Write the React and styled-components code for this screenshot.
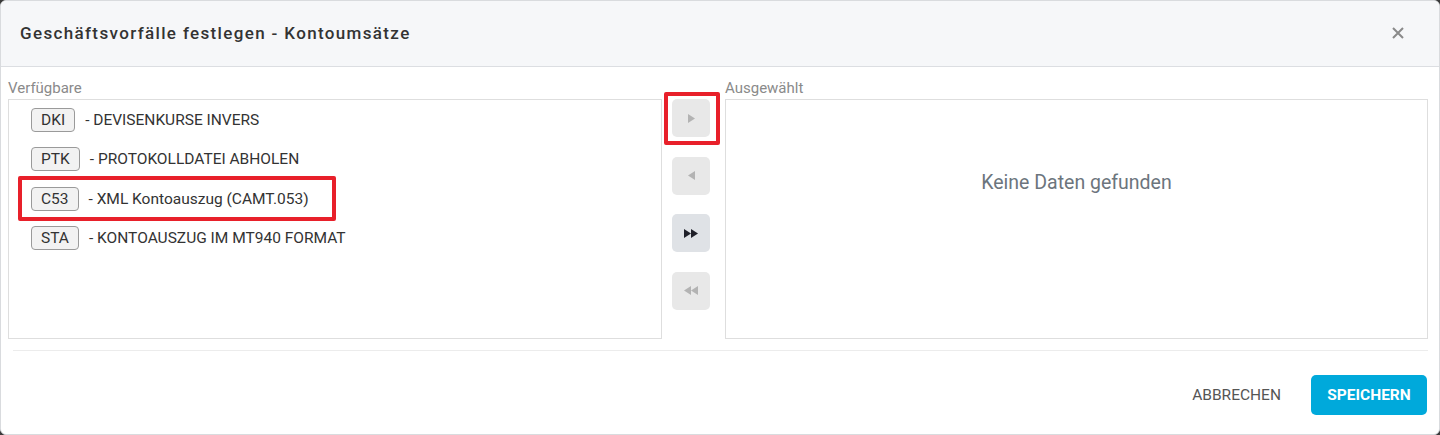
import React from "react";
import styled, { createGlobalStyle } from "styled-components";

const Global = createGlobalStyle`
  html, body { margin: 0; padding: 0; background: #3a3a3a; }
  body { font-family: Roboto, "Liberation Sans", Arial, sans-serif; }
  *, *::before, *::after { box-sizing: border-box; }
`;

const Dialog = styled.div`
  width: 1440px;
  height: 435px;
  background: #fff;
  border: 1px solid #d9dbde;
  border-radius: 6px;
  overflow: hidden;
  display: flex;
  flex-direction: column;
`;

const Header = styled.div`
  height: 66px;
  flex: none;
  background: #f6f7f9;
  border-bottom: 1px solid #dcdee2;
  display: flex;
  align-items: center;
  justify-content: space-between;
  padding: 0 34px 1px 19px;
`;

const Title = styled.h1`
  margin: 0;
  font-size: 17px;
  font-weight: 500;
  letter-spacing: 1.35px;
  color: #333;
`;

const CloseButton = styled.button`
  border: 0;
  background: none;
  padding: 0;
  width: 14px;
  height: 14px;
  display: flex;
  align-items: center;
  justify-content: center;
  cursor: pointer;
`;

const Body = styled.div`
  display: grid;
  grid-template-columns: 654px 63px 1fr;
  padding: 11px 11px 0 7px;
`;

const Column = styled.div`
  display: flex;
  flex-direction: column;
`;

const Label = styled.div`
  font-size: 15px;
  line-height: 21px;
  color: #8a8a8a;
`;

const ListBox = styled.div`
  height: 240px;
  border: 1px solid #dedede;
  display: flex;
  flex-direction: column;
  justify-content: ${(p) => (p.$empty ? "center" : "flex-start")};
  align-items: ${(p) => (p.$empty ? "center" : "stretch")};
  padding-bottom: ${(p) => (p.$empty ? "74px" : "0")};
`;

const Row = styled.div`
  position: relative;
  height: 39.5px;
  display: flex;
  align-items: center;
  padding-left: 22px;
  font-size: 15.5px;
  color: #333;

  ${(p) =>
    p.$marked &&
    `
    &::after {
      content: "";
      position: absolute;
      left: 9px;
      width: 318px;
      top: -3px;
      height: 45px;
      border: 4px solid #e8202a;
      border-radius: 2px;
      pointer-events: none;
    }
  `}
`;

const Chip = styled.span`
  display: inline-flex;
  align-items: center;
  height: 24px;
  padding: 0 9px;
  border: 1px solid #9a9a9a;
  border-radius: 4px;
  background: #f2f2f2;
  font-size: 15.5px;
  color: #333;
`;

const RowText = styled.span`
  margin-left: 10px;
`;

const Transfer = styled.div`
  display: flex;
  flex-direction: column;
  gap: 19.5px;
  padding: 21px 0 0 10px;
`;

const MoveButton = styled.button`
  position: relative;
  width: 38px;
  height: 38px;
  border: 0;
  border-radius: 5px;
  background: ${(p) => (p.$active ? "#dfe2e6" : "#e8e8e8")};
  display: flex;
  align-items: center;
  justify-content: center;
  padding: 0;
  cursor: ${(p) => (p.$active ? "pointer" : "default")};

  ${(p) =>
    p.$marked &&
    `
    &::after {
      content: "";
      position: absolute;
      left: -8px;
      right: -10px;
      top: -7px;
      bottom: -8px;
      border: 4px solid #e8202a;
      border-radius: 2px;
      pointer-events: none;
    }
  `}
`;

const EmptyText = styled.div`
  font-size: 19.5px;
  color: #6c757d;
`;

const Divider = styled.hr`
  margin: 11px 11px 0 12px;
  border: 0;
  border-top: 1px solid #ececec;
`;

const Footer = styled.div`
  flex: 1;
  display: flex;
  align-items: center;
  justify-content: flex-end;
  padding: 4px 12px 0 0;
  gap: 15px;
`;

const TextButton = styled.button`
  border: 0;
  background: none;
  font-family: inherit;
  font-size: 15.5px;
  color: #555;
  padding: 0 15px;
  height: 40px;
  cursor: pointer;
`;

const PrimaryButton = styled.button`
  border: 0;
  border-radius: 5px;
  background: #00a9db;
  color: #fff;
  font-family: inherit;
  font-size: 15.5px;
  font-weight: 700;
  width: 116px;
  height: 40px;
  cursor: pointer;
`;

const Arrow = ({ dir = "right", double = false, color }) => {
  const single = (x) =>
    dir === "right" ? `M${x} 0 L${x + 7} 4.5 L${x} 9 Z` : `M${x + 7} 0 L${x} 4.5 L${x + 7} 9 Z`;
  return (
    <svg width={double ? 14 : 7} height="9" viewBox={double ? "0 0 14 9" : "0 0 7 9"}>
      <path d={single(0)} fill={color} />
      {double && <path d={single(7)} fill={color} />}
    </svg>
  );
};

const items = [
  { code: "DKI", text: "- DEVISENKURSE INVERS" },
  { code: "PTK", text: "- PROTOKOLLDATEI ABHOLEN" },
  { code: "C53", text: "- XML Kontoauszug (CAMT.053)", marked: true },
  { code: "STA", text: "- KONTOAUSZUG IM MT940 FORMAT" },
];

export default function App() {
  return (
    <>
      <Global />
      <Dialog>
        <Header>
          <Title>Geschäftsvorfälle festlegen - Kontoumsätze</Title>
          <CloseButton aria-label="Schließen">
            <svg width="12" height="12" viewBox="0 0 12 12">
              <path d="M1 1 L11 11 M11 1 L1 11" stroke="#8a8a8a" strokeWidth="2" />
            </svg>
          </CloseButton>
        </Header>
        <Body>
          <Column>
            <Label>Verfügbare</Label>
            <ListBox>
              {items.map((it) => (
                <Row key={it.code} $marked={it.marked}>
                  <Chip>{it.code}</Chip>
                  <RowText>{it.text}</RowText>
                </Row>
              ))}
            </ListBox>
          </Column>
          <Transfer>
            <MoveButton $marked>
              <Arrow dir="right" color="#b3b3b3" />
            </MoveButton>
            <MoveButton>
              <Arrow dir="left" color="#b3b3b3" />
            </MoveButton>
            <MoveButton $active>
              <Arrow dir="right" double color="#1f2029" />
            </MoveButton>
            <MoveButton>
              <Arrow dir="left" double color="#b3b3b3" />
            </MoveButton>
          </Transfer>
          <Column>
            <Label>Ausgewählt</Label>
            <ListBox $empty>
              <EmptyText>Keine Daten gefunden</EmptyText>
            </ListBox>
          </Column>
        </Body>
        <Divider />
        <Footer>
          <TextButton>ABBRECHEN</TextButton>
          <PrimaryButton>SPEICHERN</PrimaryButton>
        </Footer>
      </Dialog>
    </>
  );
}
